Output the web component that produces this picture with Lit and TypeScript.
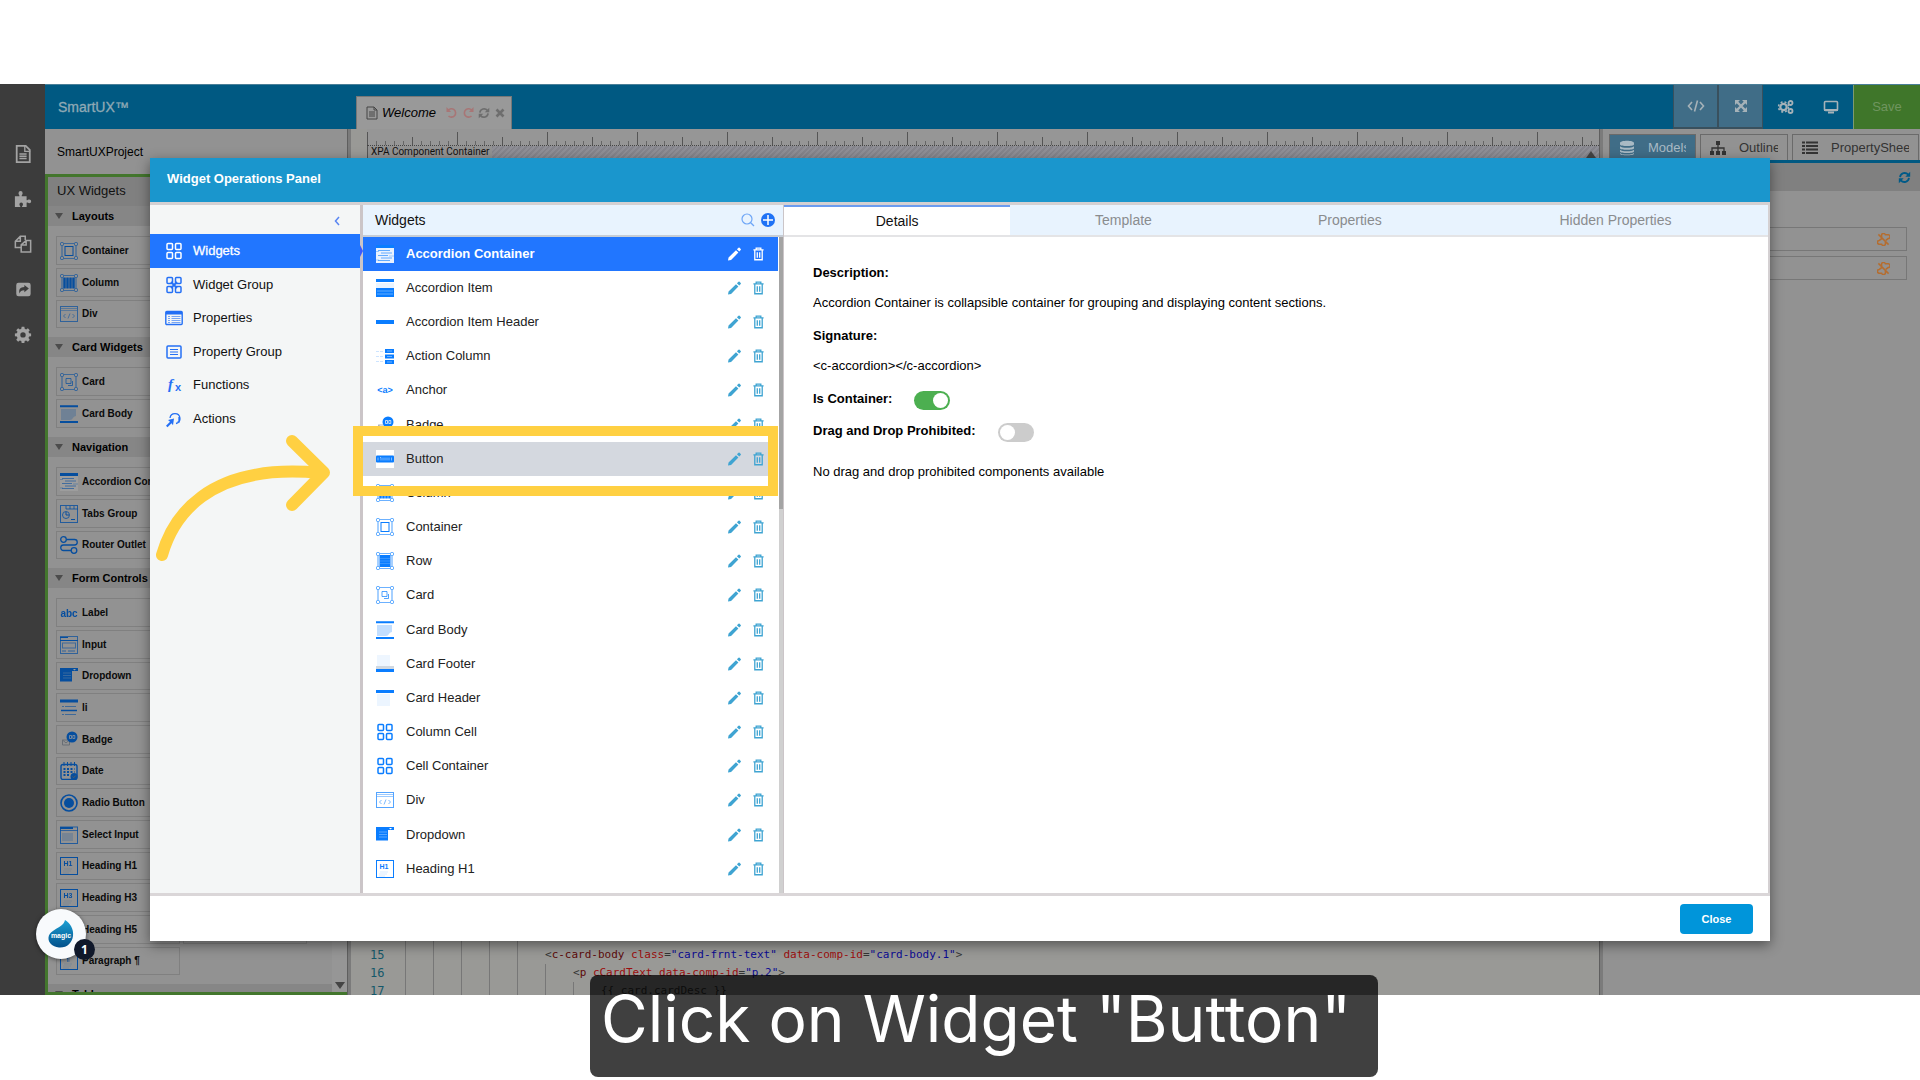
import { LitElement, html, svg, css, nothing } from "lit";
import { customElement, state } from "lit/decorators.js";
import { classMap } from "lit/directives/class-map.js";

/* ---------- glyphs: 18x18 widget icons ---------- */

const B = "#0a7dff";
const corners = svg`
  <path d="M4 1.500h10M4 16.500h10M2 4v10M16 4v10" fill="none" stroke=${B} stroke-width="1.200" opacity=".6"/>
  <g fill="none" stroke=${B} stroke-width=".9" opacity=".85"><rect x=".5" y=".5" width="3" height="3" rx="1"/><rect x="14.5" y=".5" width="3" height="3" rx="1"/><rect x=".5" y="14.5" width="3" height="3" rx="1"/><rect x="14.5" y="14.5" width="3" height="3" rx="1"/></g>`;
const cells = svg`<g fill="none" stroke="currentColor" stroke-width="1.500"><rect x="2" y="1.500" width="5.500" height="6" rx="1"/><rect x="10.500" y="1.500" width="5.500" height="6" rx="1"/><rect x="2" y="10.500" width="5.500" height="6" rx="1"/><rect x="10.500" y="10.500" width="5.500" height="6" rx="1"/></g>`;

const heading = (label: string) => svg`
  <rect x=".5" y=".5" width="17" height="17" fill="none" stroke=${B}/>
  <text x="8" y="9" font-size="7" font-weight="700" text-anchor="middle" fill=${B}>${label}</text>
  <path d="M4 12h8M3 14h8M3 16h6" stroke=${B} opacity=".15"/>`;

const ICONS: Record<string, unknown> = {
  accordion: svg`<rect width="18" height="18" fill="#fff" opacity=".9" class="plate"/><path d="M0 1.500h18" stroke=${B} stroke-width="3"/><g fill="none" stroke=${B} opacity=".6"><path d="M2 5.500h12M5 8h11M2 10.500h10M5 13h11M2 15.500h12"/></g><path d="M0 6.500h3M13 11h5M0 15h3" stroke=${B} opacity=".35"/>`,
  accordionItem: svg`<path d="M0 1.500h18" stroke=${B} stroke-width="3"/><path d="M0 6.500h18" stroke=${B} stroke-width="5" opacity=".08"/><rect y="9" width="18" height="9" fill=${B}/><path d="M1 12h16M1 15h16" stroke="#fff" opacity=".35"/>`,
  header: svg`<rect y="7" width="18" height="4" fill=${B}/>`,
  actionColumn: svg`<path d="M0 4.500h8M0 9.500h8M0 14.500h8" stroke=${B} stroke-dasharray="3 1" opacity=".2"/><path d="M9 2h9v4H9zM9 7.500h9v4H9zM9 13h9v4H9z" fill=${B}/><path d="M11 4h5M11 9.500h5M11 15h5" stroke="#fff" opacity=".4"/>`,
  anchor: svg`<text x="9" y="12" font-size="9" font-weight="700" text-anchor="middle" fill=${B}>&lt;a&gt;</text>`,
  badge: svg`<path d="M2.500 9h7v5h-7zM2.500 9l3.500 3 3.500-3" fill="none" stroke="#a9b2bd"/><circle cx="12" cy="6" r="5.500" fill=${B}/><path d="M9.500 4.500h2v3h-2zM12.800 4.500h2v3h-2z" fill="none" stroke="#fff" stroke-width=".7"/>`,
  button: svg`<rect width="18" height="18" fill="#fff"/><rect y="5.500" width="18" height="7" rx="1" fill=${B}/><path d="M2 7.500v3M4 7.500h1v3M7 7.500v3M9 7.500v3M11 7.500v3M13 7.500v3M15.500 7.500v3" stroke="#fff" stroke-width=".8" opacity=".6" fill="none"/>`,
  column: svg`${corners}<path d="M4.500 3.500v11M7.500 3.500v11M10.500 3.500v11M13.500 3.500v11" stroke=${B} stroke-width="2.500"/>`,
  container: svg`${corners}<rect x="5" y="4.500" width="8" height="9" fill="none" stroke=${B}/>`,
  row: svg`${corners}<rect x="3.500" y="3" width="11" height="12" fill=${B}/><path d="M4 6.500h10M4 9h10M4 11.500h10" stroke="#fff" stroke-width=".6" opacity=".3"/>`,
  card: svg`${corners}<path d="M6 5.500h5v5H6zM8 12.500h4.500V8" fill="none" stroke=${B} opacity=".7"/>`,
  cardBody: svg`<path d="M0 1.200h18M0 17h18" stroke=${B} stroke-width="2"/><path d="M1 4h15v7c-3 0-3 4-6 4H1z" fill=${B} opacity=".25"/>`,
  cardFooter: svg`<rect x="1" width="13" height="11" fill=${B} opacity=".07"/><rect y="11" width="18" height="3" fill="#8a9db5" opacity=".4"/><rect y="14" width="18" height="3" fill=${B}/>`,
  cardHeader: svg`<rect y="1" width="18" height="3" fill=${B}/><rect x="1" y="5" width="13" height="12" fill=${B} opacity=".08"/>`,
  cells,
  div: svg`<rect x=".5" y="1.500" width="17" height="15" fill="none" stroke=${B} opacity=".7"/><path d="M1 3.500h16M1 5.500h16" stroke=${B} opacity=".4"/><path d="M5.500 9l-2 2 2 2M12.500 9l2 2-2 2M10 8.500l-2 5" fill="none" stroke=${B} stroke-width=".9" opacity=".6"/>`,
  dropdown: svg`<rect y="1" width="18" height="3" fill=${B}/><path d="M13 2h3l-1.500 1.500z" fill="#fff"/><rect y="3" width="12" height="11.500" fill=${B}/><path d="M3 6h8M3 8.500h8M3 11h8" stroke="#fff" stroke-width=".8" opacity=".4"/>`,
  h1: heading("H1"),
  h3: heading("H3"),
  h5: heading("H5"),
  para: heading("¶"),
  tabs: svg`<rect x=".5" y=".5" width="17" height="17" fill="none" stroke=${B} opacity=".8"/><path d="M6 1v3h12M10 1v3M14 1v3" fill="none" stroke=${B} opacity=".8"/><circle cx="6" cy="10" r="3.500" fill="none" stroke=${B} opacity=".8"/><path d="M6 7v3h3M11 14.500h4" fill="none" stroke=${B}/>`,
  route: svg`<g fill="none" stroke=${B} stroke-width="1.300"><circle cx="3.500" cy="3.500" r="2.800"/><circle cx="14" cy="14.500" r="2.800"/><path d="M6.500 3.500h8a2.600 2.600 0 010 5.500h-11a2.600 2.600 0 000 5.500h7.500"/></g>`,
  input: svg`<rect x=".5" y=".5" width="17" height="17" fill="none" stroke=${B} opacity=".7"/><path d="M0 1.500h8M0 4.500h18" stroke=${B}/><rect x="2.500" y="7" width="13" height="5" fill="none" stroke=${B} opacity=".6"/><path d="M2 15h4M8 15h7" stroke=${B} opacity=".7"/>`,
  list: svg`<path d="M0 2h18" stroke=${B} stroke-width="3"/><path d="M2 7.500h2M5 7.500h11M2 15.500h2M5 15.500h11" stroke=${B} opacity=".6"/><path d="M1 11.500h16" stroke=${B} stroke-width="1.500"/>`,
  date: svg`<rect x="1" y="2.500" width="16" height="15" rx="2" fill="none" stroke=${B} stroke-width="1.400"/><path d="M4 0v4M7.500 0v4M11 0v4M14.500 0v4" stroke=${B}/><path d="M3.500 7h11M3.500 10h11M3.500 13h7" stroke=${B} stroke-width="1.800" stroke-dasharray="2 1.500"/><circle cx="14" cy="14.500" r="3.500" fill=${B}/><path d="M12.500 14.500l1.200 1.200 2-2.200" fill="none" stroke="#929292"/>`,
  radio: svg`<circle cx="9" cy="9" r="8" fill="none" stroke=${B} stroke-width="1.600"/><circle cx="9" cy="9" r="5" fill=${B}/>`,
  select: svg`<rect x=".5" y="1" width="17" height="16.500" fill="none" stroke=${B} opacity=".8"/><path d="M0 2h13" stroke=${B} stroke-width="2"/><path d="M0 4.500h18" stroke=${B} opacity=".7"/><rect x="2" y="7" width="11" height="8" fill=${B} opacity=".2"/>`,
  label: svg`<text x="9" y="13" font-size="10" font-weight="700" text-anchor="middle" fill=${B}>abc</text>`,

  navWidgets: cells,
  navGroup: svg`${cells}<path d="M6 6l6 6M12 6l-6 6" stroke="currentColor" stroke-width="1.800"/>`,
  navProps: svg`<rect x=".8" y="2.500" width="16.400" height="13" rx="1" fill="none" stroke="currentColor" stroke-width="1.400"/><path d="M1 4h16" stroke="currentColor" stroke-width="3"/><path d="M3 7.500h2M6.500 7.500h9M3 9.500h2M6.500 9.500h9M3 11.500h2M6.500 11.500h9M3 13.500h2M6.500 13.500h9" stroke="currentColor" opacity=".6"/>`,
  navPropGroup: svg`<rect x="2" y="3" width="14" height="12" rx="1" fill="none" stroke="currentColor" stroke-width="1.500"/><path d="M5 6.500h8M5 9h8M5 11.500h8" stroke="currentColor" stroke-width="1.200"/>`,
  navFx: svg`<text x="3" y="13" font-size="15" font-weight="700" font-style="italic" class="serif" fill="currentColor">f</text><text x="10" y="15" font-size="11" font-weight="700" fill="currentColor">x</text>`,
  navActions: svg`<path d="M5 8a5 5 0 116 5.500M12.500 12h1.500V7" fill="none" stroke="currentColor" stroke-width="1.300"/><path d="M9 8.500l-6 1.500 2 1.800-4 4 1.500 1.500 4-4 1.500 2z" fill="currentColor"/>`,
};

const icon = (name: string) => html`<svg class="ic" viewBox="0 0 18 18" aria-hidden="true">${ICONS[name]}</svg>`;

/* ---------- glyphs: toolbar and actions ---------- */

const pencil = html`<svg class="act" viewBox="0 0 14 14" aria-hidden="true"><path d="M0 14l.6-3.300L8.600 3l2.600 2.500L3.300 13.400zM9.600 2l1.700-1.700q.6-.5 1.200 0l1.200 1.200q.5.600 0 1.200L12.100 4.400z" fill="currentColor"/></svg>`;
const trash = html`<svg class="act" viewBox="0 0 14 14" aria-hidden="true"><path d="M1.500 2.500h11M4.500 2V.7h5V2M3 2.500v10.700h8V2.500M5.700 5v6M8.300 5v6" fill="none" stroke="currentColor" stroke-width="1.400"/></svg>`;

const cog = svg`<path fill-rule="evenodd" d="M8.500 2h3l.4 2.300 1.600.7 1.900-1.400 2.100 2.100L16.100 7.600l.7 1.500 2.200.4v3l-2.200.4-.7 1.600 1.400 1.900-2.100 2.100-1.900-1.400-1.600.7-.4 2.200h-3l-.4-2.200-1.600-.7-1.900 1.400-2.100-2.100 1.400-1.900-.7-1.600L1 12.500v-3l2.200-.4.7-1.500-1.400-1.900 2.100-2.100L6.500 5l1.600-.7zM10 8a3 3 0 100 6 3 3 0 000-6z" fill="currentColor"/>`;
const refreshPath = svg`<path d="M2.500 7.500a5.700 5.700 0 0110-3M13.500 8.500a5.700 5.700 0 01-10 3" fill="none" stroke="currentColor" stroke-width="2.200"/><path d="M15 1v6H9zM1 15V9h6z" fill="currentColor"/>`;

const RAIL = [
  { label: "Pages", art: svg`<path d="M3 1h10l4.500 4.500V19H3z" fill="none" stroke="currentColor" stroke-width="2"/><path d="M12 1v6h6M6 10h8M6 12.500h8M6 15h8" fill="none" stroke="currentColor" stroke-width="1.500"/>` },
  { label: "Components", art: svg`<path d="M1 7h5c.5-1-1-2-1-3.500a2.300 2.300 0 014.600 0C9.600 5 8 6 8.600 7H14v4c1 .8 1.500-.5 3-.5a2 2 0 010 4.200c-1.500 0-2-1.300-3-.5V19H9c-.6-1 1-1.600 1-3a2 2 0 00-4 0c0 1.400 1.600 2 1 3H1z" fill="currentColor"/>` },
  { label: "Copies", art: svg`<path d="M12.500 5.500V1.500H7L1.500 7v7h6M7 1.500V7H1.500M8 11l5.500-5h5v13H8zM13.500 6v5H8" fill="none" stroke="currentColor" stroke-width="1.700"/>` },
  { label: "Share", art: svg`<path fill-rule="evenodd" d="M5 3h11a2.500 2.500 0 012.500 2.500v10A2.500 2.500 0 0116 18H5a2.500 2.500 0 01-2.500-2.500v-10A2.500 2.500 0 015 3zm6.500 2.500v2.300C7 8 4.800 10.500 6.200 15c.8-2.500 2-3.700 5.300-3.700v2.400L16.500 9.500z" fill="currentColor"/>` },
  { label: "Settings", art: cog },
];

/* ---------- data ---------- */

const SECTIONS: { title: string; items: [string, string][] }[] = [
  { title: "Layouts", items: [["container", "Container"], ["column", "Column"], ["div", "Div"]] },
  { title: "Card Widgets", items: [["card", "Card"], ["cardBody", "Card Body"]] },
  { title: "Navigation", items: [["accordion", "Accordion Container"], ["tabs", "Tabs Group"], ["route", "Router Outlet"]] },
  {
    title: "Form Controls",
    items: [["label", "Label"], ["input", "Input"], ["dropdown", "Dropdown"], ["list", "li"], ["badge", "Badge"], ["date", "Date"],
      ["radio", "Radio Button"], ["select", "Select Input"], ["h1", "Heading H1"], ["h3", "Heading H3"], ["h5", "Heading H5"], ["para", "Paragraph ¶"]],
  },
  { title: "Table", items: [] },
];

const NAV: [string, string][] = [
  ["navWidgets", "Widgets"], ["navGroup", "Widget Group"], ["navProps", "Properties"],
  ["navPropGroup", "Property Group"], ["navFx", "Functions"], ["navActions", "Actions"],
];

const WIDGETS: [string, string][] = [
  ["accordion", "Accordion Container"], ["accordionItem", "Accordion Item"], ["header", "Accordion Item Header"],
  ["actionColumn", "Action Column"], ["anchor", "Anchor"], ["badge", "Badge"], ["button", "Button"], ["column", "Column"],
  ["container", "Container"], ["row", "Row"], ["card", "Card"], ["cardBody", "Card Body"], ["cardFooter", "Card Footer"],
  ["cardHeader", "Card Header"], ["cells", "Column Cell"], ["cells", "Cell Container"], ["div", "Div"],
  ["dropdown", "Dropdown"], ["h1", "Heading H1"],
];

const TABS = ["Details", "Template", "Properties", "Hidden Properties"];

@customElement("app-root")
export class AppRoot extends LitElement {
  @state() private selected = 0;
  @state() private section = 0;
  @state() private tab = 0;

  static styles = css`
    :host {
      display: block;
      position: relative;
      height: 100vh;
      overflow: hidden;
      box-sizing: border-box;
      padding: 84px 0 85px;
      background: #fff;
      color: #111;
      font: 13px/16px "Liberation Sans", Arial, sans-serif;
    }
    *, *::before, *::after { box-sizing: border-box; }
    button { font: inherit; color: inherit; background: none; border: 0; padding: 0; margin: 0; text-align: left; cursor: pointer; }
    h1, h2, h3, p { margin: 0; font-size: inherit; font-weight: inherit; }
    svg { display: block; flex: none; }
    svg text { font-family: "Liberation Sans", Arial, sans-serif; }
    svg .serif { font-family: "Liberation Serif", serif; }
    .ic { width: 18px; height: 18px; }

    /* shell */
    .app { display: flex; height: 100%; background: #929292; overflow: hidden; }
    .rail { flex: none; width: 45px; padding-top: 47px; background: #3c3c3c; color: #a3a3a3; display: flex; flex-direction: column; }
    .rail button { height: 45px; display: grid; place-items: center; }
    .rail svg { width: 18px; height: 18px; }
    .main { flex: 1; min-width: 0; display: flex; flex-direction: column; }
    .top { flex: none; height: 45px; display: flex; align-items: flex-end; background: #005982; border-top: 1px solid #4a7f98; color: #8fa9b5; }
    .brand { width: 311px; padding-left: 13px; align-self: center; margin-bottom: 1px; font-size: 14px; line-height: 18px; -webkit-text-stroke: .3px; }
    .file { height: 33px; width: 156px; padding: 0 9px; display: flex; align-items: center; gap: 4px; background: #999; border: 1px solid #777; border-bottom: 0; color: #000; font-style: italic; }
    .file svg { width: 12px; height: 14px; color: #444; }
    .file .tools { display: flex; gap: 4px; margin-left: 6px; }
    .file .tools svg { width: 12px; height: 12px; color: #6e6e6e; }
    .file .tools .undo { color: #a87676; }
    .tools-right { margin-left: auto; display: flex; align-self: stretch; color: #a6b2b8; }
    .tools-right button { width: 45px; display: grid; place-items: center; }
    .tools-right svg { width: 18px; height: 18px; }
    .tools-right .on { background: #406d87; border: 1px solid #39505d; border-width: 0 1px 2px 1px; }
    .tools-right .save { width: 67px; background: #3f762a; color: #6f955f; border-left: 1px solid #7d9a70; }
    .body { flex: 1; min-height: 0; display: flex; }

    /* left palette */
    .left { flex: none; width: 302px; display: flex; flex-direction: column; }
    .project { flex: none; height: 45px; padding: 15px 12px 0; background: #929292; font-size: 12px; color: #000; }
    .palette { flex: 1; min-height: 0; display: flex; flex-direction: column; border: 3px solid #43762d; border-right: 0; }
    .palette h2 { flex: none; height: 29px; padding: 6px 9px; background: #808080; }
    .scroller { flex: 1; min-height: 0; display: flex; overflow: hidden; }
    .groups { flex: 1; min-width: 0; }
    .track { width: 15px; background: #969696; display: flex; justify-content: center; align-items: flex-end; padding-bottom: 3px; }
    .track i, .up { border: 5px solid transparent; border-top: 7px solid #444; border-bottom: 0; }
    .groups h3 { height: 20px; padding-left: 7px; display: flex; align-items: center; gap: 9px; background: #868686; font-size: 11px; font-weight: 700; color: #000; }
    .groups h3 i { border: 4px solid transparent; border-top: 6px solid #4c4c4c; border-bottom: 0; }
    .cards { padding: 10px 8px 9px; display: flex; flex-direction: column; gap: 3px; }
    .line { display: flex; gap: 3px; height: 29px; }
    .line:nth-child(3n) { height: 28px; }
    .slot { flex: none; width: 124px; padding: 0 3px; display: flex; align-items: center; gap: 4px; border: 1px solid #808080; background: #929292; font-size: 10px; font-weight: 700; color: #0a0a0a; white-space: nowrap; overflow: hidden; }
    .slot .ic { filter: brightness(.62); }
    .gutter { flex: none; width: 4px; background: #7b7b7b; border-left: 1px solid #5f5f5f; }

    /* editor */
    .editor { flex: 1; min-width: 0; display: flex; flex-direction: column; background: #999996; }
    .ruler { flex: none; height: 17px; margin-left: 16px; background-color: #969696; border-bottom: 1px dotted #444;
      background-image: linear-gradient(90deg, #555 1px, transparent 1px), linear-gradient(90deg, #555 1px, transparent 1px), linear-gradient(90deg, #666 1px, transparent 1px);
      background-size: 90px 13px, 45px 8px, 9px 4px; background-repeat: repeat-x; background-position: 0 100%; }
    .stage { flex: none; height: 200px; margin-left: 16px; display: flex; background: repeating-linear-gradient(135deg, #85858c 0 2px, #8f8f96 2px 4px); }
    .stage span { height: 13px; padding: 0 3px; background: #929292; font: 10px/12px Roboto, sans-serif; color: #111; border-left: 1px solid #555; }
    .stage .up { margin: 5px 3px 0 auto; height: 0; border-top: 0; border-bottom: 7px solid #444; }
    .code { margin-top: auto; height: 68px; padding: 0 0 0 19px; font: 11px/18px "DejaVu Sans Mono", monospace; color: #333; overflow: hidden; display: flex; flex-direction: column; justify-content: flex-end; }
    .code div { flex: none; display: flex; white-space: pre; height: 18px; }
    .code div:last-child { height: 13px; }
    .code .no { width: 35px; color: #15586a; font-size: 12px; }
    .code .tab { width: 28px; border-left: 1px solid #777; }
    .code b { font-weight: 400; color: #5c0a0a; }
    .code em { font-style: normal; color: #9c0d0d; }
    .code q { quotes: none; color: #0a0a93; }

    /* right dock */
    .dock { flex: none; width: 317px; background: #929292; }
    .dock-tabs { height: 34px; padding: 5px 1px 0 6px; display: flex; gap: 4px; border-bottom: 3px solid #005982; }
    .dock-tabs button { height: 26px; padding: 0 9px; display: flex; align-items: center; border: 1px solid #6a6a6a; border-bottom: 0; color: #333; overflow: hidden; }
    .dock-tabs button:nth-child(1) { width: 87px; background: #406d87; color: #a9bac4; }
    .dock-tabs button:nth-child(2) { width: 88px; }
    .dock-tabs button:nth-child(3) { flex: 1; }
    .dock-tabs svg { width: 16px; height: 16px; margin-right: 13px; }
    .dock-tabs span { overflow: hidden; white-space: nowrap; }
    .dock-bar { height: 28px; padding-right: 9px; display: flex; align-items: center; justify-content: flex-end; background: #808080; color: #005a87; }
    .dock-bar svg { width: 13px; height: 13px; }
    .fields { padding: 36px 13px 0; display: flex; flex-direction: column; gap: 5px; }
    .field { height: 24px; padding-right: 16px; display: flex; justify-content: flex-end; align-items: center; border: 1px solid #777; color: #b56d2f; }
    .field svg { width: 13px; height: 13px; }

    /* dialog */
    .dialog { position: absolute; inset: 158px 150px 139px 150px; display: flex; flex-direction: column; background: #fff; box-shadow: 0 4px 12px rgba(0, 0, 0, .45); }
    .dialog header { flex: none; height: 44px; padding: 13px 17px; background: #1a96cd; color: #fff; font-weight: 700; }
    .panes { flex: 1; min-height: 0; display: flex; border-top: 3px solid #d4d0d2; }
    .side { flex: none; width: 210px; background: #f4f6f6; }
    .fold { width: 100%; height: 29px; padding: 3px 20px 0; display: flex; align-items: center; justify-content: flex-end; color: #5a86f2; }
    .fold svg { width: 6px; height: 10px; }
    .nav { position: relative; width: 100%; height: 33px; padding-left: 15px; display: flex; align-items: center; gap: 10px; }
    .nav:nth-of-type(even) { height: 34px; }
    .nav svg { color: #2470f5; }
    .nav.on { background: #2176ff; color: #fff; -webkit-text-stroke: .3px; }
    .nav.on svg { color: #fff; }
    .nav.on::after { content: ""; position: absolute; left: 100%; top: 11px; border: 6px solid transparent; border-left: 3px solid #3a5bff; border-right: 0; }
    .list { flex: none; width: 423px; display: flex; flex-direction: column; border-left: 3px solid #cbc5c8; }
    .list-head { flex: none; height: 32px; padding: 0 8px 0 12px; display: flex; align-items: center; background: #e8f3fe; border-bottom: 2px solid #c6cdd6; font-size: 14px; }
    .list-head h2 { flex: 1; }
    .list-head button { margin-left: 6px; }
    .list-head svg { width: 14px; height: 14px; }
    .rows { flex: 1; min-height: 0; display: flex; overflow: hidden; }
    .rows ul { flex: 1; margin: 0; padding: 0; list-style: none; }
    .row { height: 34px; padding: 0 13px; display: flex; align-items: center; gap: 11px; color: #3fa4d2; }
    .row:nth-child(6n) { height: 35px; }
    .row .name { flex: 1; align-self: stretch; display: flex; align-items: center; gap: 12px; color: #222; }
    .row .name svg { color: #0a7dff; }
    .row.sel { background: #2176ff; color: #fff; font-weight: 700; }
    .row.sel .name { color: #fff; }
    .row.hover { background: #d4d8df; }
    .act { width: 13px; height: 14px; }
    .bar { flex: none; width: 5px; border-left: 1px solid #fff; background: #d0d0d0; }
    .bar i { display: block; height: 272px; background: #a4a4a4; }
    .detail { flex: 1; min-width: 0; border-left: 1px solid #cbc5c8; border-right: 2px solid #d4d0d2; }
    .tabs { display: flex; height: 32px; background: #e8f3fe; border-bottom: 2px solid #e4e4e6; }
    .tabs button { flex: 0 0 23%; text-align: center; font-size: 14px; color: #8a8c8e; }
    .tabs button:last-child { flex: 1; }
    .tabs .on { background: #fff; border-top: 2px solid #6c9cf0; color: #111; }
    .info { padding: 27px 29px; color: #000; }
    .info h3 { font-weight: 700; height: 30px; line-height: 18px; }
    .info p { height: 33px; line-height: 18px; }
    .toggle { display: flex; align-items: flex-start; gap: 22px; height: 32px; line-height: 18px; font-weight: 700; }
    .toggle + .toggle { height: 41px; }
    .switch { appearance: none; margin: 1px 0 0; width: 36px; height: 19px; padding: 2px; border-radius: 10px; background: #ccc; display: flex; }
    .switch::before { content: ""; width: 15px; height: 15px; border-radius: 50%; background: #fff; }
    .switch:checked { background: #4caf50; justify-content: flex-end; }
    .foot { flex: none; height: 48px; border-top: 3px solid #dad6d8; padding: 8px 17px 7px; display: flex; justify-content: flex-end; }
    .close { width: 73px; height: 30px; border-radius: 4px; background: #0095da; color: #fff; font-size: 11px; font-weight: 700; text-align: center; }

    /* overlays */
    .mark { position: absolute; left: 353px; top: 426px; width: 425px; height: 70px; border: 10px solid #ffd042; pointer-events: none; }
    .arrow { position: absolute; left: 150px; top: 430px; width: 190px; height: 140px; pointer-events: none; }
    .chat { position: absolute; left: 36px; top: 909px; width: 50px; height: 50px; border-radius: 50%; background: #f8fafc; box-shadow: 0 1px 4px rgba(0, 0, 0, .5); display: grid; place-items: center; }
    .chat svg { width: 26px; height: 28px; }
    .count { position: absolute; left: 38px; top: 30px; width: 21px; height: 21px; border-radius: 50%; background: #10182a; color: #fff; font: 700 12px/21px "Open Sans", sans-serif; text-align: center; }
    .caption { position: absolute; left: 590px; top: 975px; height: 102px; padding: 0 11px; width: 788px; border-radius: 8px; background: rgba(0, 0, 0, .75); color: #fff; font: 64px/88px Inter, sans-serif; white-space: nowrap; }
  `;

  private renderTop() {
    return html`
      <header class="top">
        <h1 class="brand">SmartUX™</h1>
        <div class="file">
          <svg viewBox="0 0 12 14"><path d="M1 1h7l3 3v9H1zM8 1v3h3M3 6h6M3 8h6M3 10h6" fill="none" stroke="currentColor"/></svg>
          <span>Welcome</span>
          <span class="tools">
            <svg class="undo" viewBox="0 0 12 12"><path d="M2 3.500A4.200 4.200 0 112.500 9" fill="none" stroke="currentColor" stroke-width="1.600"/><path d="M.5 0v5H5z" fill="currentColor"/></svg>
            <svg class="undo" viewBox="0 0 12 12"><path d="M10 3.500A4.200 4.200 0 109.500 9" fill="none" stroke="currentColor" stroke-width="1.600"/><path d="M11.500 0v5H7z" fill="currentColor"/></svg>
            <svg viewBox="0 0 16 16">${refreshPath}</svg>
            <svg viewBox="0 0 12 12"><path d="M2.500 2.500l7 7M9.500 2.500l-7 7" stroke="currentColor" stroke-width="2.600"/></svg>
          </span>
        </div>
        <div class="tools-right">
          <button class="on" aria-label="Code"><svg viewBox="0 0 18 18"><path d="M5 5L1.500 9 5 13M13 5l3.500 4L13 13M10.500 3.500l-3 11" fill="none" stroke="currentColor" stroke-width="1.600"/></svg></button>
          <button class="on" aria-label="Expand"><svg viewBox="0 0 18 18"><path d="M5 5l8 8M13 5l-8 8" stroke="currentColor" stroke-width="2.400"/><path d="M3 3h5L3 8zM15 3v5l-5-5zM3 15v-5l5 5zM15 15h-5l5-5z" fill="currentColor"/></svg></button>
          <button aria-label="Settings"><svg viewBox="0 0 18 18"><circle cx="6.500" cy="9" r="3.200" fill="none" stroke="currentColor" stroke-width="2.200"/><circle cx="6.500" cy="9" r="5" fill="none" stroke="currentColor" stroke-width="1.500" stroke-dasharray="2 2"/><circle cx="13.500" cy="5" r="2" fill="none" stroke="currentColor" stroke-width="1.800"/><circle cx="13.500" cy="13" r="2" fill="none" stroke="currentColor" stroke-width="1.800"/></svg></button>
          <button aria-label="Preview"><svg viewBox="0 0 18 18"><rect x="2.500" y="3.500" width="13" height="9" rx="1" fill="none" stroke="currentColor" stroke-width="1.600"/><path d="M2 12h14M6 14.500h6" stroke="currentColor" stroke-width="2"/></svg></button>
          <button class="save">Save</button>
        </div>
      </header>`;
  }

  private renderPalette() {
    return html`
      <aside class="left">
        <p class="project">SmartUXProject</p>
        <div class="palette">
          <h2>UX Widgets</h2>
          <div class="scroller">
            <div class="groups">
              ${SECTIONS.map((s) => html`
                <section>
                  <h3><i></i>${s.title}</h3>
                  <div class="cards">
                    ${s.items.map(([ic, name]) => html`
                      <div class="line">
                        <div class="slot">${icon(ic)}${name}</div>
                        ${ic === "h5" ? html`<div class="slot"></div>` : nothing}
                      </div>`)}
                  </div>
                </section>`)}
            </div>
            <div class="track"><i></i></div>
          </div>
        </div>
      </aside>`;
  }

  private indent(count: number) {
    return Array.from({ length: count }, () => html`<span class="tab"></span>`);
  }

  private renderEditor() {
    return html`
      <section class="editor">
        <div class="ruler"></div>
        <div class="stage"><span>XPA Component Container</span><i class="up"></i></div>
        <div class="code">
          <div><span class="no">14</span>${this.indent(5)}<span>&lt;/<b>div</b>&gt;</span></div>
          <div><span class="no">15</span>${this.indent(5)}<span>&lt;<b>c-card-body</b> <em>class</em>=<q>"card-frnt-text"</q> <em>data-comp-id</em>=<q>"card-body.1"</q>&gt;</span></div>
          <div><span class="no">16</span>${this.indent(6)}<span>&lt;<b>p</b> <em>cCardText</em> <em>data-comp-id</em>=<q>"p.2"</q>&gt;</span></div>
          <div><span class="no">17</span>${this.indent(7)}<span>{{ card.cardDesc }}</span></div>
        </div>
      </section>`;
  }

  private renderDock() {
    const unlink = html`<svg viewBox="0 0 14 14"><path d="M1.500 1.500l11 11M5 4.500V3a2 2 0 014-1l3 0a2 2 0 010 4L9.500 8M9 9.500V11a2 2 0 01-4 1H2.500a2 2 0 010-4L5 6" fill="none" stroke="currentColor" stroke-width="1.600"/></svg>`;
    return html`
      <aside class="dock">
        <div class="dock-tabs">
          <button><svg viewBox="0 0 16 16"><path d="M1 3c0-3 14-3 14 0v1.500c0 2-14 2-14 0zM1 6.200c2 2 12 2 14 0v2c0 2-14 2-14 0zM1 9.700c2 2 12 2 14 0v1.800c0 2-14 2-14 0zM1 13c2 2 12 2 14 0v.8c0 2-14 2-14 0z" fill="currentColor"/></svg><span>Models</span></button>
          <button><svg viewBox="0 0 16 16"><path d="M6 1h4v4H6zM0 11h4v4H0zM6 11h4v4H6zM12 11h4v4h-4z" fill="currentColor"/><path d="M8 4v8M2 12V8h12v4" fill="none" stroke="currentColor" stroke-width="1.300"/></svg><span>Outline</span></button>
          <button><svg viewBox="0 0 16 16"><path d="M0 2.500h3M4 2.500h12M0 6h3M4 6h12M0 9.500h3M4 9.500h12M0 13h3M4 13h12" stroke="currentColor" stroke-width="2"/></svg><span>PropertySheet</span></button>
        </div>
        <div class="dock-bar"><svg viewBox="0 0 16 16">${refreshPath}</svg></div>
        <div class="fields"><div class="field">${unlink}</div><div class="field">${unlink}</div></div>
      </aside>`;
  }

  private renderDialog() {
    return html`
      <div class="dialog" role="dialog" aria-labelledby="dlg-title">
        <header><h2 id="dlg-title">Widget Operations Panel</h2></header>
        <div class="panes">
          <nav class="side">
            <button class="fold" aria-label="Collapse"><svg viewBox="0 0 6 10"><path d="M5 1L1.500 5 5 9" fill="none" stroke="currentColor" stroke-width="1.500"/></svg></button>
            ${NAV.map(([ic, name], i) => html`
              <button class="nav ${classMap({ on: i === this.section })}" @click=${() => (this.section = i)}>${icon(ic)}${name}</button>`)}
          </nav>
          <section class="list">
            <div class="list-head">
              <h2>Widgets</h2>
              <button aria-label="Search"><svg viewBox="0 0 14 14"><circle cx="6" cy="6" r="5" fill="none" stroke="#6ea6f7" stroke-width="1.200"/><path d="M9.700 9.700L13 13" stroke="#6ea6f7" stroke-width="1.300"/></svg></button>
              <button aria-label="Add widget"><svg viewBox="0 0 14 14"><circle cx="7" cy="7" r="7" fill="#1f72f5"/><path d="M7 2v10M2 7h10" stroke="#fff" stroke-width="1.500"/></svg></button>
            </div>
            <div class="rows">
              <ul>
                ${WIDGETS.map(([ic, name], i) => html`
                  <li class="row ${classMap({ sel: i === this.selected, hover: name === "Button" && i !== this.selected })}">
                    <button class="name" @click=${() => (this.selected = i)}>${icon(ic)}${name}</button>
                    <button aria-label="Edit ${name}">${pencil}</button>
                    <button aria-label="Delete ${name}">${trash}</button>
                  </li>`)}
              </ul>
              <div class="bar"><i></i></div>
            </div>
          </section>
          <section class="detail">
            <div class="tabs" role="tablist">
              ${TABS.map((t, i) => html`<button role="tab" class=${classMap({ on: i === this.tab })} @click=${() => (this.tab = i)}>${t}</button>`)}
            </div>
            <div class="info">
              <h3>Description:</h3>
              <p>Accordion Container is collapsible container for grouping and displaying content sections.</p>
              <h3>Signature:</h3>
              <p>&lt;c-accordion&gt;&lt;/c-accordion&gt;</p>
              <div class="toggle"><label for="is-container">Is Container:</label><input class="switch" id="is-container" type="checkbox" checked /></div>
              <div class="toggle"><label for="dnd">Drag and Drop Prohibited:</label><input class="switch" id="dnd" type="checkbox" /></div>
              <p>No drag and drop prohibited components available</p>
            </div>
          </section>
        </div>
        <div class="foot"><button class="close">Close</button></div>
      </div>`;
  }

  render() {
    return html`
      <div class="app">
        <nav class="rail">
          ${RAIL.map((r) => html`<button aria-label=${r.label}><svg viewBox="0 0 20 20">${r.art}</svg></button>`)}
        </nav>
        <div class="main">
          ${this.renderTop()}
          <div class="body">
            ${this.renderPalette()}
            <div class="gutter"></div>
            ${this.renderEditor()}
            <div class="gutter"></div>
            ${this.renderDock()}
          </div>
        </div>
      </div>
      ${this.renderDialog()}
      <div class="mark"></div>
      <svg class="arrow" viewBox="150 430 190 140" aria-hidden="true">
        <path d="M162 555C172 520 205 462 320 473M292 441l32 31.500-32 32.500" fill="none" stroke="#ffd042" stroke-width="12" stroke-linecap="round" stroke-linejoin="round"/>
      </svg>
      <button class="chat" aria-label="Open chat">
        <svg viewBox="0 0 26 28">
          <defs><linearGradient id="drop" x1="0" y1="0" x2="0" y2="1"><stop offset="0" stop-color="#1ba0d4"/><stop offset="1" stop-color="#03508a"/></linearGradient></defs>
          <path d="M17 0c5 3 9 9 8 16s-6 12-14 11.500C4 27 0 22 .5 17.500 1 12 8 9 12 6.500 15 4.500 16.500 2.500 17 0z" fill="url(#drop)"/>
          <text x="13" y="18" font-size="7" font-weight="700" text-anchor="middle" fill="#fff">magic</text>
        </svg>
        <span class="count">1</span>
      </button>
      <div class="caption">Click on Widget "Button"</div>`;
  }
}
